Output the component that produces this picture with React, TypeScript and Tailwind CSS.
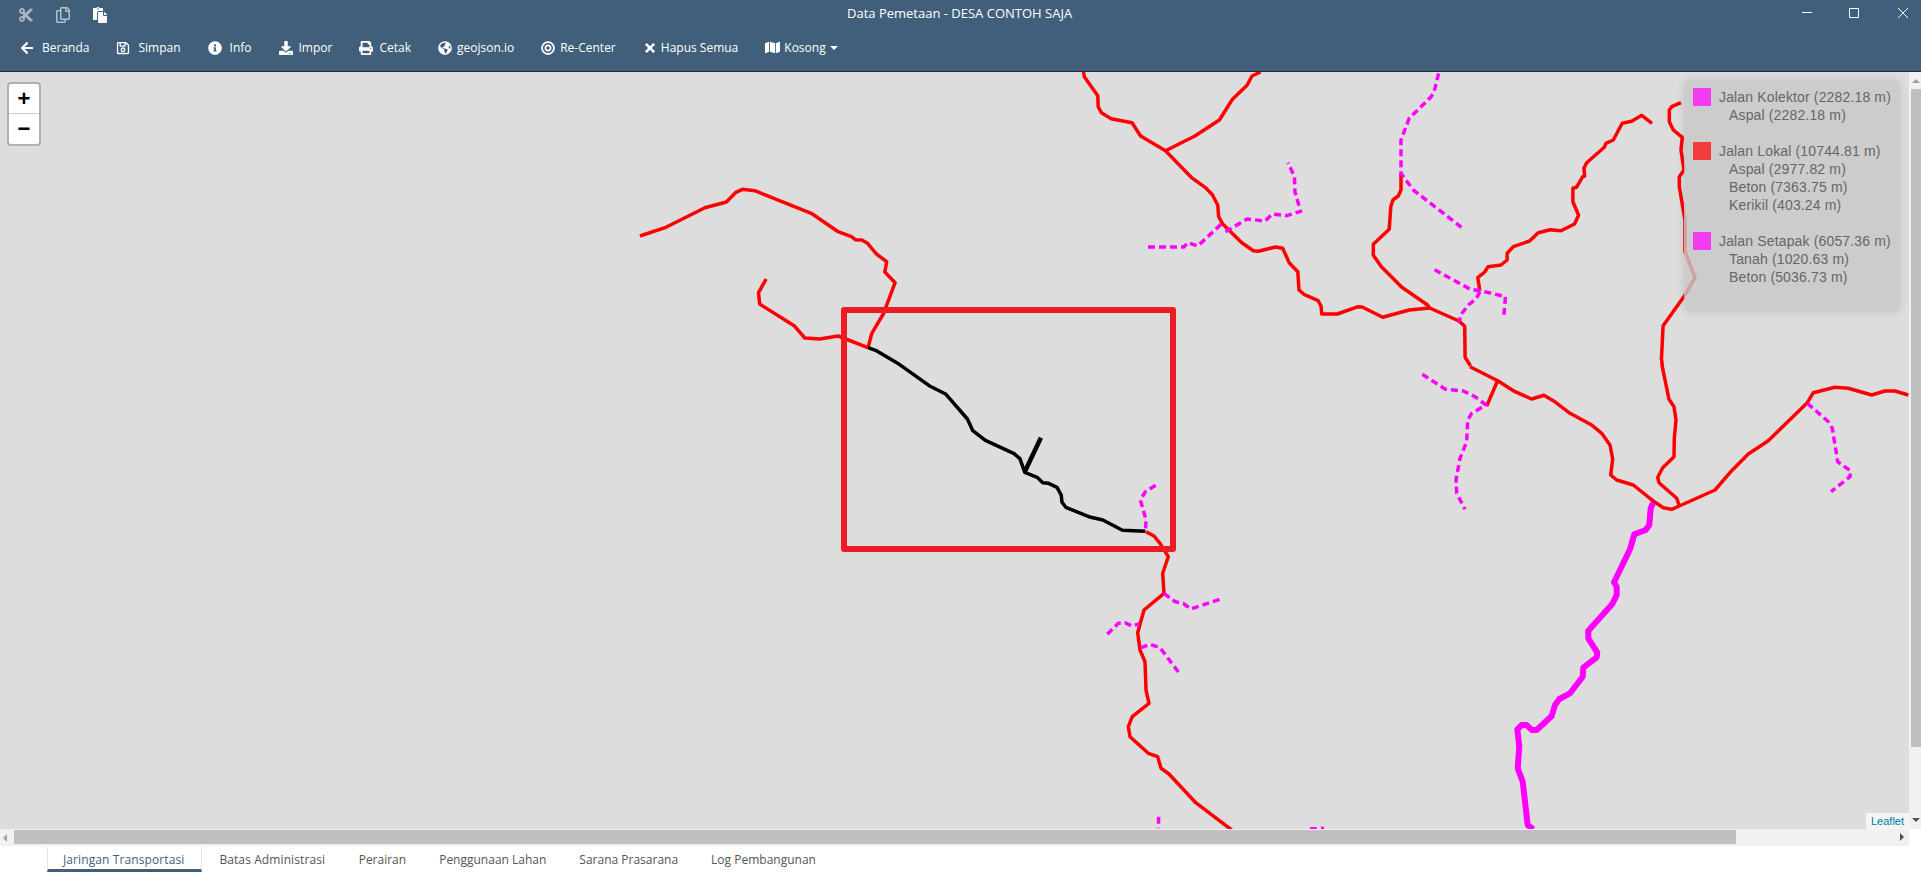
import React from 'react';
import {
  FaArrowLeft,
  FaRegSave,
  FaInfoCircle,
  FaDownload,
  FaPrint,
  FaGlobeAmericas,
  FaBullseye,
  FaTimes,
  FaMap,
  FaCut,
  FaRegCopy,
  FaPaste,
} from 'react-icons/fa';

// coordinates were read off crops of the map, so each road keeps its crop's origin and scale
const pts = (ox: number, oy: number, kx: number, ky: number, p: number[]) => {
  const out: string[] = [];
  for (let i = 0; i < p.length; i += 2) {
    out.push(`${(ox + p[i] * kx).toFixed(1)},${(oy + p[i + 1] * ky).toFixed(1)}`);
  }
  return out.join(' ');
};
const a = (p: number[]) => pts(620, 170, 600 / 1568, 1 / 3, p);
const b = (p: number[]) => pts(1050, 60, 640 / 1568, 1 / 3, p);
const c = (p: number[]) => pts(1400, 360, 1 / 3, 1 / 3, p);
const d = (p: number[]) => pts(1050, 460, 1 / 3, 1 / 3, p);
const e = (p: number[]) => pts(1560, 0, 1 / 3, 1 / 3, p);

const redRoads = [
  a([52, 198, 120, 172, 222, 113, 278, 96, 303, 67, 320, 58, 352, 62, 500, 130, 570, 185, 605, 200, 615, 209, 632, 210, 647, 220, 670, 252, 697, 275, 692, 306, 719, 338, 688, 432, 658, 490, 648, 533]),
  a([382, 327, 362, 368, 365, 402, 455, 467, 483, 504, 522, 507, 570, 498, 590, 507, 648, 533]),
  b([82, 36, 84, 50, 117, 107, 118, 140, 126, 158, 150, 176, 201, 188, 222, 228, 283, 272, 346, 352, 380, 382, 398, 404, 411, 436, 413, 470, 423, 492, 470, 548, 498, 572, 510, 574, 552, 561, 570, 565, 586, 608, 607, 635, 610, 690, 622, 703, 657, 722, 664, 738, 666, 762, 704, 762, 755, 740, 765, 741, 815, 772, 880, 750, 930, 744, 1002, 783, 1016, 799, 1017, 892, 1030, 917]),
  c([210, 20, 293, 62, 345, 95, 395, 117, 432, 106, 460, 122, 510, 160, 575, 195, 605, 220, 630, 255, 638, 297, 632, 345, 650, 360, 700, 375, 765, 427, 790, 443, 815, 448, 838, 438, 945, 390, 995, 332, 1045, 282, 1105, 242, 1222, 128, 1240, 98, 1305, 82, 1345, 85, 1415, 105, 1455, 93, 1485, 93, 1525, 105]),
  b([283, 272, 355, 228, 415, 180, 447, 118, 483, 76, 495, 48, 516, 36]),
  b([860, 340, 860, 390, 853, 408, 840, 420, 835, 440, 831, 508, 792, 553, 792, 586, 812, 620, 862, 682, 925, 735, 930, 744]),
  b([1053, 692, 1048, 653, 1065, 636, 1073, 620, 1105, 615, 1120, 600, 1120, 580, 1135, 560, 1175, 543, 1196, 518, 1225, 509, 1252, 512, 1285, 492, 1295, 466, 1281, 425, 1281, 385, 1290, 382, 1305, 350, 1310, 348, 1308, 325, 1315, 308, 1358, 262, 1362, 250, 1380, 240, 1402, 190, 1425, 184, 1450, 166, 1475, 190]),
  e([363, 308, 335, 320, 328, 330, 328, 365, 340, 390, 367, 412, 363, 450, 372, 510, 358, 530, 358, 560, 375, 660, 375, 755, 405, 833, 375, 885]),
  b([1556, 705, 1502, 797, 1498, 900]),
  c([785, 0, 787, 20, 807, 118, 822, 140, 828, 180, 823, 235, 822, 290, 788, 323, 773, 352, 777, 368, 830, 415, 838, 438]),
  b([1097, 961, 1070, 1038]),
  d([288, 215, 312, 228, 330, 250, 355, 290, 338, 340, 342, 400, 282, 450, 263, 518, 270, 570, 285, 605, 288, 690, 297, 730, 247, 770, 235, 800, 240, 830, 295, 880, 323, 890, 333, 925, 357, 942, 437, 1028, 545, 1110]),
];

const dashedRoads = [
  b([240, 561, 328, 561, 337, 548, 362, 558, 420, 492]),
  b([430, 515, 483, 477, 527, 483, 545, 462, 580, 467, 614, 454, 600, 395, 599, 350, 583, 308]),
  b([952, 40, 940, 100, 930, 115, 880, 175, 860, 240, 860, 340, 890, 390, 1008, 502]),
  b([942, 629, 1030, 688, 1055, 692, 1116, 710, 1112, 765]),
  b([1053, 695, 1045, 715, 1025, 735, 1006, 765, 1003, 785]),
  c([67, 43, 135, 87, 190, 93, 225, 110, 258, 135, 215, 160, 203, 180, 200, 245, 180, 295, 168, 360, 170, 400, 195, 448]),
  c([1222, 130, 1285, 185, 1297, 205, 1313, 305, 1352, 333, 1350, 350, 1293, 395]),
  a([1400, 946, 1373, 965, 1360, 990, 1375, 1050, 1373, 1084]),
  d([342, 400, 375, 425, 400, 430, 423, 447, 510, 418]),
  d([172, 523, 205, 490, 225, 488, 245, 498, 268, 492]),
  d([272, 563, 300, 553, 330, 563, 392, 645]),
  d([326, 1070, 325, 1105]),
  d([780, 1107, 822, 1105]),
];

const collector = c([760, 428, 752, 445, 748, 495, 737, 510, 703, 523, 690, 568, 642, 667, 650, 680, 650, 705, 637, 732, 565, 812, 565, 835, 592, 878, 590, 892, 550, 923, 548, 950, 510, 1000, 478, 1017, 465, 1035, 455, 1068, 410, 1110, 395, 1110, 380, 1095, 365, 1095, 352, 1108, 358, 1160, 353, 1225, 368, 1265, 383, 1395, 400, 1408]);

const selected = a([648, 533, 668, 541, 730, 583, 808, 647, 852, 673, 908, 747, 922, 782, 955, 811, 1030, 851, 1045, 866, 1058, 907, 1090, 922, 1105, 938, 1120, 940, 1142, 952, 1153, 975, 1155, 997, 1165, 1012, 1225, 1040, 1262, 1050, 1313, 1081, 1373, 1084]);
const selectedSpur = a([1100, 803, 1058, 905]);

const menu = [
  { icon: <FaArrowLeft />, label: 'Beranda', gap: 'gap-[8px]' },
  { icon: <FaRegSave />, label: 'Simpan', gap: 'gap-[8px]' },
  { icon: <FaInfoCircle />, label: 'Info', gap: 'gap-[8px]' },
  { icon: <FaDownload />, label: 'Impor', gap: 'gap-[6px]' },
  { icon: <FaPrint />, label: 'Cetak', gap: 'gap-[6px]' },
  { icon: <FaGlobeAmericas />, label: 'geojson.io', gap: 'gap-[5px]' },
  { icon: <FaBullseye />, label: 'Re-Center', gap: 'gap-[5px]' },
  { icon: <FaTimes />, label: 'Hapus Semua', gap: 'gap-[4px]' },
];

const legend = [
  { color: 'bg-[#f23cf0]', lines: ['Jalan Kolektor (2282.18 m)', 'Aspal (2282.18 m)'] },
  { color: 'bg-[#f23c3c]', lines: ['Jalan Lokal (10744.81 m)', 'Aspal (2977.82 m)', 'Beton (7363.75 m)', 'Kerikil (403.24 m)'] },
  { color: 'bg-[#f23cf0]', lines: ['Jalan Setapak (6057.36 m)', 'Tanah (1020.63 m)', 'Beton (5036.73 m)'] },
];

const tabs = [
  { label: 'Jaringan Transportasi', cls: 'border-x-[#e5e5e5] border-b-[#415f7b] pl-[15px] pr-[17px] tracking-[0.1px] text-[#415f7b]' },
  { label: 'Batas Administrasi', cls: 'border-transparent px-[16px] tracking-[0.1px]' },
  { label: 'Perairan', cls: 'border-transparent px-[15.5px]' },
  { label: 'Penggunaan Lahan', cls: 'border-transparent px-[15.5px]' },
  { label: 'Sarana Prasarana', cls: 'border-transparent px-[15.5px]' },
  { label: 'Log Pembangunan', cls: 'border-transparent px-[15.5px]' },
];

const Legend = () => (
  <div className="absolute top-[8px] right-[9px] w-[216px] rounded-[8px] bg-[rgba(200,200,200,0.8)] p-2 pl-[9px] text-[14px] leading-[18px] tracking-[0.15px] text-[#666] shadow-[0_0_10px_rgba(0,0,0,0.12)] font-['Liberation_Sans',sans-serif]">
    {legend.map((group) => (
      <div key={group.lines[0]} className="mb-[18px] flex">
        <div className={`h-[18px] w-[18px] shrink-0 ${group.color}`} />
        <div className="ml-2 whitespace-nowrap">
          {group.lines.map((line, i) => (
            <div key={line} className={i > 0 ? 'pl-[10px]' : ''}>
              {line}
            </div>
          ))}
        </div>
      </div>
    ))}
  </div>
);

export default function App() {
  return (
    <div className="flex h-[875px] w-[1921px] flex-col overflow-hidden bg-white font-['Open_Sans',sans-serif]">
      <header className="h-[72px] shrink-0 border-b border-[#1f2f3f] bg-[#415f7b] text-white">
        <div className="relative flex h-[28px] items-center pl-[18px] pt-[1px]">
          <div className="flex items-center gap-[21px] text-[16px]">
            <FaCut className="text-[#a9b5c1]" />
            <FaRegCopy className="text-[#b4bfc9]" />
            <FaPaste className="text-white" />
          </div>
          <div className="absolute left-[847px] top-[4px] whitespace-nowrap text-[13px] leading-[18px]">
            Data Pemetaan - DESA CONTOH SAJA
          </div>
          <div className="absolute right-[13px] top-[8px] flex items-center">
            <svg width="10" height="10" viewBox="0 0 10 10"><path d="M0 4.5h10" stroke="#fff" strokeWidth="1" /></svg>
            <svg className="ml-[37px]" width="10" height="10" viewBox="0 0 10 10"><path d="M.5.5h9v9h-9z" fill="none" stroke="#fff" strokeWidth="1" /></svg>
            <svg className="ml-[39px]" width="10" height="10" viewBox="0 0 10 10"><path d="M0 0l10 10M10 0L0 10" stroke="#fff" strokeWidth="1" /></svg>
          </div>
        </div>
        <nav className="flex h-[38px] items-center gap-[27px] pl-[20px] pt-[1px] text-[12px] font-medium leading-none">
          {menu.map((item) => (
            <div key={item.label} className={`flex items-center whitespace-nowrap ${item.gap}`}>
              <span className="flex w-[14px] justify-center text-[14px]">{item.icon}</span>
              <span>{item.label}</span>
            </div>
          ))}
          <div className="flex items-center gap-[4px] whitespace-nowrap">
            <FaMap className="text-[15px]" />
            <span>Kosong</span>
            <span className="border-x-[4px] border-t-[4px] border-x-transparent border-t-white" />
          </div>
        </nav>
      </header>

      <div className="flex h-[757px] shrink-0">
        <div className="relative flex-1 overflow-hidden bg-[#dddddd]">
          <svg className="absolute left-0 top-0" width="1909" height="757" viewBox="0 72 1909 757" fill="none" strokeLinejoin="round">
            {redRoads.map((p) => (
              <polyline key={p} points={p} stroke="#ff0000" strokeWidth="3.5" />
            ))}
            {dashedRoads.map((p) => (
              <polyline key={p} points={p} stroke="#ff00ff" strokeWidth="3.5" strokeDasharray="7 4" />
            ))}
            <polyline points={collector} stroke="#ff00ff" strokeWidth="6" />
            <polyline points={selected} stroke="#000000" strokeWidth="3.5" />
            <polyline points={selectedSpur} stroke="#000000" strokeWidth="4.5" />
            <rect x="844" y="310" width="329" height="239" stroke="#ed1c24" strokeWidth="6" />
          </svg>

          <div className="absolute left-[7px] top-[10px] flex w-[34px] flex-col overflow-hidden rounded-[4px] border-2 border-[#b1b1b1] bg-white font-['Liberation_Sans',sans-serif] text-[22px] font-bold leading-[30px] text-black">
            <div className="h-[30px] border-b border-[#ccc] text-center">+</div>
            <div className="h-[30px] text-center">−</div>
          </div>

          <Legend />

          <div className="absolute bottom-0 right-0 bg-[rgba(255,255,255,0.7)] px-[5px] font-['Liberation_Sans',sans-serif] text-[11px] leading-[16px] text-[#0078a8]">
            Leaflet
          </div>
        </div>

        <div className="relative w-[12px] bg-[#f1f1f1]">
          <div className="absolute left-[3px] top-[7px] border-x-[4px] border-b-[4px] border-x-transparent border-b-[#a3a3a3]" />
          <div className="absolute left-[2px] right-0 top-[17px] h-[658px] bg-[#bfbfbf]" />
          <div className="absolute bottom-[7px] left-[3px] border-x-[4px] border-t-[4px] border-x-transparent border-t-[#505050]" />
        </div>
      </div>

      <div className="relative h-[17px] w-[1909px] shrink-0 bg-[#f1f1f1]">
        <div className="absolute left-[3px] top-[5px] border-y-[4px] border-r-[4px] border-y-transparent border-r-[#a3a3a3]" />
        <div className="absolute left-[14px] top-[1px] h-[14px] w-[1722px] bg-[#bfbfbf]" />
        <div className="absolute right-[5px] top-[4px] border-y-[4px] border-l-[4px] border-y-transparent border-l-[#505050]" />
      </div>

      <div className="flex h-[26px] shrink-0 pl-[47px] pt-[1px] text-[12px] leading-[26px] text-[#555]">
        {tabs.map((tab) => (
          <div key={tab.label} className={`whitespace-nowrap border-x border-b-[3px] ${tab.cls}`}>
            {tab.label}
          </div>
        ))}
      </div>
    </div>
  );
}
